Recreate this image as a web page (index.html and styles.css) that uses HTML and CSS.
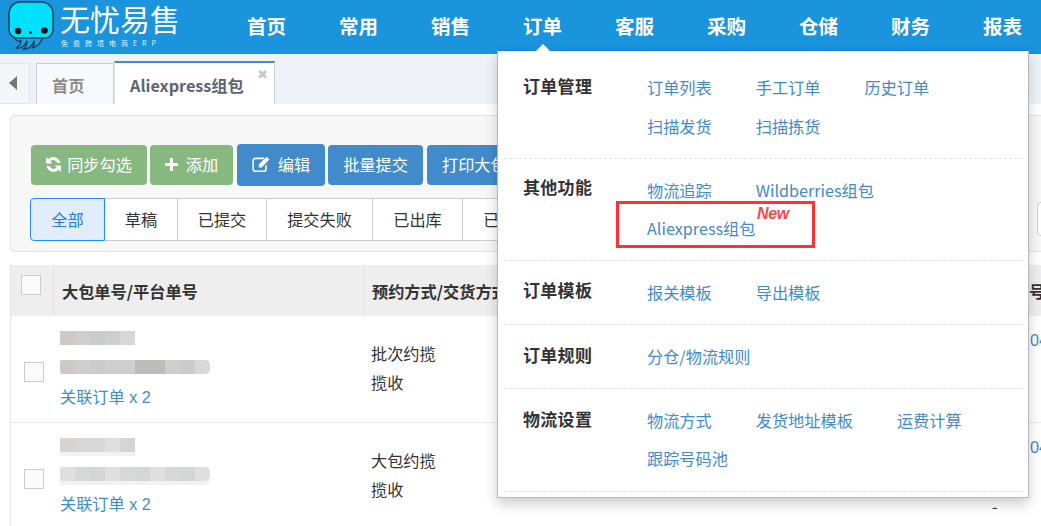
FILE: index.html
```html
<!DOCTYPE html>
<html lang="zh">
<head>
<meta charset="utf-8">
<title>Aliexpress组包</title>
<link rel="stylesheet" href="styles.css">
</head>
<body>
<header class="topbar">
  <div class="brand">
    <svg class="logo" width="60" height="54" viewBox="0 0 60 54">
      <path d="M14 37C16 42 20 42 21 40C21 44 18 47 16 48C20 49 25 46 27 41C27 45 25 48 23 49C28 50 33 45 34 41C35 44 33 47 32 48C37 47 41 43 43 37Z" fill="#14a5e2" stroke="#123f5e" stroke-width="1.300" stroke-linejoin="round"/>
      <path d="M20 2H41C48 2 53 7 53 14V29C53 33 51 36 47 38H15C11 36 9 33 9 29V14C9 7 14 2 20 2Z" fill="#00e1ff" stroke="#123f5e" stroke-width="1.500"/>
      <circle cx="18" cy="31" r="3.300" fill="#0a1a22"/>
      <circle cx="30.500" cy="32.500" r="1.300" fill="#0a1a22"/>
      <circle cx="44.500" cy="30.500" r="3.300" fill="#0a1a22"/>
    </svg>
    <div class="brand-text">
      <span class="brand-name">无忧易售</span>
      <span class="brand-sub">免费跨境电商ERP</span>
    </div>
  </div>
  <nav class="nav">
    <a>首页</a><a>常用</a><a>销售</a><a>订单</a><a>客服</a><a>采购</a><a>仓储</a><a>财务</a><a>报表</a>
  </nav>
</header>

<div class="tabbar">
  <div class="tab-arrow"><span class="arrow-left"></span></div>
  <div class="tab">首页</div>
  <div class="tab tab-active">Aliexpress组包<span class="tab-close">✖</span></div>
</div>

<main class="content">
  <section class="panel">
    <div class="actions">
      <button class="btn btn-green btn-sync">
        <svg class="ico" width="15" height="15" viewBox="1.500 1.500 13 13"><path d="M14 6.600A6.300 6.300 0 0 0 3.400 3.400L1.500 1.600V7.200H7L5.200 5.300A3.800 3.800 0 0 1 11.400 6.600ZM2 9.400A6.300 6.300 0 0 0 12.600 12.600L14.500 14.400V8.800H9L10.800 10.700A3.800 3.800 0 0 1 4.600 9.400Z" fill="#fff"/></svg>同步勾选</button>
      <button class="btn btn-green btn-add"><span class="plus"></span>添加</button>
      <button class="btn btn-blue btn-edit">
        <svg class="ico" width="18" height="16" viewBox="0.500 1 16 14"><path d="M11 3H3.500A2 2 0 0 0 1.500 5V12.500A2 2 0 0 0 3.500 14.500H11A2 2 0 0 0 13 12.500V9" fill="none" stroke="#fff" stroke-width="1.400"/><path d="M6.500 8.500 13.500 1.500 16 4 9 11H6.500Z" fill="#fff"/></svg>编辑</button>
      <button class="btn btn-blue">批量提交</button>
      <button class="btn btn-blue btn-print">打印大包面单</button>
    </div>
    <div class="filters">
      <span class="filter filter-on">全部</span><span class="filter">草稿</span><span class="filter">已提交</span><span class="filter">提交失败</span><span class="filter">已出库</span><span class="filter">已取消</span>
    </div>
    <div class="side-box"></div>
  </section>

  <section class="grid">
    <div class="row row-head">
      <div class="c-check"><span class="check"></span></div>
      <div class="c-no">大包单号/平台单号</div>
      <div class="c-way">预约方式/交货方式</div>
      <div class="c-rest">号</div>
    </div>
    <div class="row row-body">
      <div class="c-check"><span class="check"></span></div>
      <div class="c-no">
        <div class="blur blur-a"><i class="m1"></i><i class="m2"></i><i class="m3"></i><i class="m4"></i><i class="m5"></i></div>
        <div class="blur blur-b"><i class="m1"></i><i class="m2"></i><i class="m3"></i><i class="m2"></i><i class="m4"></i><i class="m6"></i><i class="m6"></i><i class="m2"></i><i class="m3"></i><i class="m5"></i></div>
        <a class="link">关联订单 x 2</a>
      </div>
      <div class="c-way"><p>批次约揽</p><p>揽收</p></div>
      <div class="c-rest"><a class="link">04</a></div>
    </div>
    <div class="row row-body">
      <div class="c-check"><span class="check"></span></div>
      <div class="c-no">
        <div class="blur blur-a blur-soft"><i class="m1"></i><i class="m2"></i><i class="m4"></i><i class="m5"></i><i class="m3"></i></div>
        <div class="blur blur-b blur-soft"><i class="m5"></i><i class="m4"></i><i class="m3"></i><i class="m5"></i><i class="m4"></i><i class="m3"></i><i class="m5"></i><i class="m4"></i><i class="m3"></i><i class="m5"></i></div>
        <a class="link">关联订单 x 2</a>
      </div>
      <div class="c-way"><p>大包约揽</p><p>揽收</p></div>
      <div class="c-rest"><a class="link">04</a><span class="dash">-</span></div>
    </div>
  </section>
</main>

<aside class="menu">
  <span class="menu-caret"></span>
  <div class="group group-1">
    <h4>订单管理</h4>
    <div class="links"><a>订单列表</a><a>手工订单</a><a>历史订单</a><a>扫描发货</a><a>扫描拣货</a></div>
  </div>
  <div class="group group-2">
    <h4>其他功能</h4>
    <div class="links"><a>物流追踪</a><a>Wildberries组包</a><a class="ali">Aliexpress组包<em class="new">New</em><span class="redbox"></span></a></div>
  </div>
  <div class="group group-3">
    <h4>订单模板</h4>
    <div class="links"><a>报关模板</a><a>导出模板</a></div>
  </div>
  <div class="group group-4">
    <h4>订单规则</h4>
    <div class="links"><a>分仓/物流规则</a></div>
  </div>
  <div class="group group-5">
    <h4>物流设置</h4>
    <div class="links"><a>物流方式</a><a>发货地址模板</a><a>运费计算</a><a>跟踪号码池</a></div>
  </div>
</aside>
</body>
</html>
```
FILE: styles.css
```css
* { box-sizing: border-box; }
html, body { margin: 0; height: 526px; overflow: hidden; }
body {
  position: relative;
  width: 1041px;
  background: #fff;
  color: #333;
  font-family: "Noto Sans CJK SC", "Liberation Sans", sans-serif;
  font-size: 16.200px;
}
a { color: #428bca; text-decoration: none; }

.topbar { height: 54px; background: #1a94dc; display: flex; overflow: hidden; }
.brand { width: 247px; flex: none; display: flex; }
.logo { flex: none; }
.brand-text { display: flex; flex-direction: column; color: #fff; }
.brand-name { font-size: 30px; line-height: 36px; height: 38px; font-weight: 400; white-space: nowrap; }
.brand-sub { font-size: 7px; line-height: 10px; letter-spacing: 5px; margin-left: 1px; opacity: .85; white-space: nowrap; }
.nav { display: flex; gap: 53px; color: #fff; }
.nav a { color: #fff; font-size: 19.500px; font-weight: 700; line-height: 52px; white-space: nowrap; width: 39px; }

.tabbar { height: 50px; background: #eff2f7; display: flex; align-items: flex-start; padding-top: 9px; }
.tab-arrow { width: 30px; height: 41px; border: 1px solid #e0e4ec; border-left: 0; background: #f3f5f9; display: flex; align-items: center; justify-content: center; margin-right: 6px; }
.arrow-left { width: 0; height: 0; border: 7.500px solid transparent; border-left: 0; border-right: 8px solid #77776f; margin-left: -4px; margin-top: -2px; }
.tab { height: 41px; width: 78px; border: 1px solid #c5d0e0; border-bottom: 0; background: #f7f9fc; color: #8b8b8b; font-weight: 700; font-size: 16.200px; line-height: 42px; padding-left: 15px; white-space: nowrap; }
.tab-active { position: relative; margin-top: -2px; width: 161px; height: 43px; border-top: 2px solid #428bca; border-left-color: #dfe6ef; background: #fff; color: #5c6474; line-height: 44px; }
.tab-close { position: absolute; right: 6px; top: 2px; line-height: 20px; font-size: 13px; color: #c8c8c8; font-weight: 400; font-family: "DejaVu Sans", sans-serif; }

.content { padding: 11px 0 0 10px; }
.panel { position: relative; width: 1040px; height: 137px; background: #f7f7f7; border: 1px solid #e3e3e3; border-radius: 4px; padding: 28px 0 0 20px; overflow: hidden; }
.actions { display: flex; align-items: center; gap: 3px; height: 42px; white-space: nowrap; }
.btn { border: 0; height: 40px; border-radius: 4px; color: #fff; font: 16.200px/22px "Noto Sans CJK SC", sans-serif; padding: 0 0 2px; display: flex; align-items: center; justify-content: center; flex: none; }
.btn-green { background: #87b87f; }
.btn-blue { background: #428bca; width: 95px; }
.btn-sync { width: 116px; }
.btn-add { width: 83px; }
.btn-edit { width: 88px; height: 42px; margin-left: 1px; }
.btn-print { width: 120px; margin-left: 1px; justify-content: flex-start; padding-left: 15px; }
.ico { margin-right: 6px; flex: none; }
.btn-edit .ico { margin-right: 8px; }
.plus { width: 13px; height: 13px; margin-right: 8px; background: linear-gradient(#fff,#fff) center/3px 13px no-repeat, linear-gradient(#fff,#fff) center/13px 3px no-repeat; }

.filters { display: flex; margin-top: 12px; margin-left: -1px; height: 43px; white-space: nowrap; }
.filter { height: 43px; line-height: 41px; padding: 0; text-align: center; background: #fff; border: 1px solid #ccc; border-left: 0; color: #333; font-size: 16.200px; flex: none; width: 90px; }
.filter:nth-child(2) { width: 73px; }
.filter:nth-child(3) { width: 89px; }
.filter:nth-child(4) { width: 106px; }
.filter:nth-child(6) { width: 90px; }
.filter-on { width: 75px; background: #e1edfa; border: 1px solid #1e8eff; border-radius: 4px 0 0 4px; color: #1c7cf0; }
.side-box { position: absolute; left: 1026px; top: 86px; width: 20px; height: 34px; border: 1px solid #ccc; border-radius: 4px; background: #fff; }

.grid { margin-top: 13px; border-left: 1px solid #e5e5e5; width: 1040px; }
.row { display: flex; border-bottom: 1px solid #e9e9e9; }
.row-head { height: 51px; background: #eee; border-bottom: 0; font-weight: 700; color: #333; font-size: 16.200px; align-items: stretch; }
.row-head > div { display: flex; align-items: center; border-right: 1px solid #e2e2e2; }
.row-body { height: 107px; }
.row-body:last-child { border-bottom: 0; }
.c-check { width: 43px; flex: none; display: flex; justify-content: center; }
.row-head .c-check { align-items: flex-start; padding-top: 10px; justify-content: flex-start; padding-left: 10px; }
.row-body .c-check { align-items: center; padding-left: 2px; padding-top: 5px; }
.check { width: 20px; height: 20px; background: #fafafa; border: 1px solid #ccc; display: block; }
.c-no { width: 310px; flex: none; padding-left: 8px; }
.row-body .c-no { padding-left: 6px; padding-top: 15px; display: flex; flex-direction: column; }
.c-way { width: 487px; flex: none; padding-left: 8px; white-space: nowrap; }
.row-body .c-way { padding-left: 7px; padding-top: 26px; color: #333; }
.c-way p { margin: 0 0 7px; line-height: 22px; }
.c-rest { flex: 1; padding-left: 178px; position: relative; }
.blur { display: flex; height: 14px; }
.blur i { display: block; width: 15px; height: 14px; }
.blur-a { width: 75px; }
.blur-b { width: 150px; margin-top: 15px; border-radius: 2px 5px 5px 2px; overflow: hidden; }
.m1 { background: #ccc9c8; } .m2 { background: #cfcecd; } .m3 { background: #c9cbcd; } .m4 { background: #cdcfcf; } .m5 { background: #d7d7d7; } .m6 { background: #bdbcbb; }
.blur-soft { box-shadow: 0 4px 0 #f2f2f2; }
.blur-soft i { opacity: .8; }
.link { color: #428bca; font-size: 16.200px; line-height: 22px; margin-top: 12px; font-family: "Liberation Sans", "Noto Sans CJK SC", sans-serif; white-space: nowrap; }
.c-rest .link { position: absolute; left: 179px; top: 13px; margin: 0; }
.dash { position: absolute; left: 141px; top: 72px; line-height: 22px; color: #333; }

.menu { position: absolute; left: 497px; top: 50px; width: 532px; height: 448px; background: #fff; border: 1px solid #b8b8b8; border-top-color: #1a82c4; box-shadow: 0 6px 12px rgba(0,0,0,.2); padding: 0 6px; }
.menu-caret { position: absolute; left: 38px; top: -7px; width: 0; height: 0; border: 7px solid transparent; border-top: 0; border-bottom: 7px solid #fff; }
.group { display: flex; border-bottom: 1px dashed #e3e3e3; align-items: flex-start; }
.group-1 { height: 108px; padding-top: 24px; }
.group-2 { height: 102px; padding-top: 17px; }
.group-3 { height: 64px; padding-top: 18px; }
.group-4 { height: 64px; padding-top: 19px; }
.group-5 { height: 103px; padding-top: 19px; }
.group h4 { margin: 0; width: 143px; padding-left: 19px; font-size: 17px; letter-spacing: .3px; font-weight: 700; line-height: 22px; color: #333; flex: none; white-space: nowrap; }
.links { display: flex; flex-wrap: wrap; width: 362px; column-gap: 44px; row-gap: 16px; margin-top: 1px; }
.links a { font-size: 16.200px; line-height: 22px; color: #428bca; white-space: nowrap; position: relative; }
.group-1 .links { row-gap: 17px; }
.group-2 .links { margin-top: 3px; }
.group-3 .links { margin-top: 2px; }
.ali { flex-basis: 100%; }
.new { position: absolute; left: 110px; top: -13px; font: italic 700 16px/20px "Liberation Sans", sans-serif; letter-spacing: -.3px; color: #f34a4a; }
.redbox { position: absolute; left: -31px; top: -16px; width: 199px; height: 47px; border: 3px solid #ff3333; pointer-events: none; }
```
